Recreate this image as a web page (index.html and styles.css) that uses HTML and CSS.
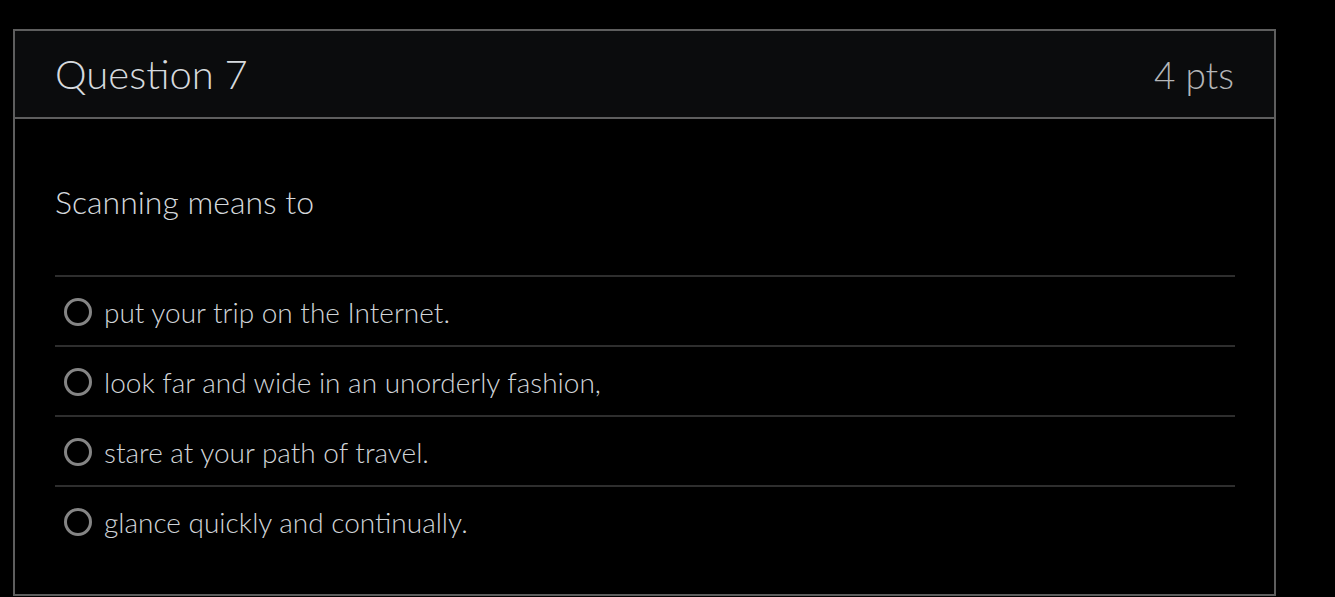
FILE: index.html
```html
<!DOCTYPE html>
<html>
<head>
<meta charset="utf-8">
<link rel="stylesheet" href="styles.css">
</head>
<body>
<div class="card">
  <div class="card-header">
    <h2 class="title">Question 7</h2>
    <span class="pts">4 pts</span>
  </div>
  <div class="card-body">
    <p class="question">Scanning means to</p>
    <div class="answers">
      <label class="answer"><span class="radio"></span><span class="answer-text">put your trip on the Internet.</span></label>
      <label class="answer"><span class="radio"></span><span class="answer-text">look far and wide in an unorderly fashion,</span></label>
      <label class="answer"><span class="radio"></span><span class="answer-text">stare at your path of travel.</span></label>
      <label class="answer"><span class="radio"></span><span class="answer-text">glance quickly and continually.</span></label>
    </div>
  </div>
</div>
</body>
</html>
```
FILE: styles.css
```css
html, body {
  margin: 0;
  padding: 0;
  background: #000;
}
body {
  font-family: Lato, "Open Sans", sans-serif;
  font-weight: 300;
  overflow: hidden;
  height: 597px;
}
.card {
  margin: 29px 0 0 13px;
  width: 1263px;
  border: 2px solid #5e5e5e;
  box-sizing: border-box;
  height: 567px;
  background: #000;
}
.card-header {
  height: 88px;
  box-sizing: border-box;
  background: #0b0c0d;
  border-bottom: 2px solid #5e5e5e;
  display: flex;
  align-items: center;
  justify-content: space-between;
  padding: 0 40px 0 40px;
}
.title {
  margin: 0;
  font-weight: 300;
  font-size: 40px;
  color: #d6dade;
  line-height: 1;
}
.pts {
  font-size: 37px;
  color: #b4b6b8;
  line-height: 1;
}
.card-body {
  padding: 0 39px 0 40px;
}
.question {
  margin: 0;
  padding: 65px 0 55px 0;
  font-size: 32px;
  line-height: 36px;
  color: #d4d8dc;
}
.answers {
  display: flex;
  flex-direction: column;
}
.answer {
  display: flex;
  align-items: center;
  height: 70px;
  box-sizing: border-box;
  border-top: 2px solid #2e2e2e;
  padding: 2px 0 0 9px;
}
.radio {
  width: 28px;
  height: 28px;
  box-sizing: border-box;
  border: 3px solid #858585;
  border-radius: 50%;
  flex: none;
  margin-right: 12px;
}
.answer-text {
  font-size: 28px;
  color: #d0d4d8;
}
```
